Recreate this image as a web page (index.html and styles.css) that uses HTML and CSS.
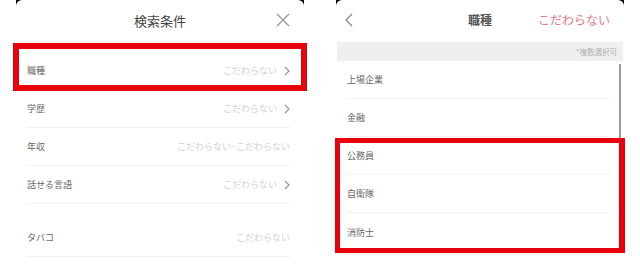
FILE: index.html
```html
<!DOCTYPE html>
<html lang="ja">
<head>
<meta charset="utf-8">
<link rel="stylesheet" href="styles.css">
</head>
<body>
<div class="panel">
  <div class="cap"></div>
  <div class="header">
    <span></span>
    <span class="title">検索条件</span>
    <svg class="close" width="14" height="14" viewBox="0 0 14 14"><path d="M1 1L13 13M13 1L1 13" stroke="#9a9a9a" stroke-width="1.4" fill="none"/></svg>
  </div>
  <div class="list left-list">
    <div class="row"><span class="label">職種</span><span class="value">こだわらない<svg class="chev" width="6" height="10" viewBox="0 0 6 10"><path d="M1 1L5 5L1 9" stroke="#999" stroke-width="1.3" fill="none"/></svg></span></div>
    <div class="row"><span class="label">学歴</span><span class="value">こだわらない<svg class="chev" width="6" height="10" viewBox="0 0 6 10"><path d="M1 1L5 5L1 9" stroke="#999" stroke-width="1.3" fill="none"/></svg></span></div>
    <div class="row"><span class="label">年収</span><span class="value">こだわらない~こだわらない</span></div>
    <div class="row"><span class="label">話せる言語</span><span class="value">こだわらない<svg class="chev" width="6" height="10" viewBox="0 0 6 10"><path d="M1 1L5 5L1 9" stroke="#999" stroke-width="1.3" fill="none"/></svg></span></div>
    <div class="row gap"><span class="label">タバコ</span><span class="value">こだわらない</span></div>
  </div>
  <div class="mark mark-left"></div>
</div>
<div class="panel">
  <div class="cap"></div>
  <div class="header header-right">
    <svg class="back" width="9" height="14" viewBox="0 0 9 14"><path d="M8 1L2 7L8 13" stroke="#8a8a8a" stroke-width="1.4" fill="none"/></svg>
    <span class="title title-bold">職種</span>
    <span class="reset">こだわらない</span>
  </div>
  <div class="note">*複数選択可</div>
  <div class="list right-list">
    <div class="row"><span class="label">上場企業</span></div>
    <div class="row"><span class="label">金融</span></div>
    <div class="row"><span class="label">公務員</span></div>
    <div class="row"><span class="label">自衛隊</span></div>
    <div class="row last"><span class="label">消防士</span></div>
  </div>
  <div class="scrollbar"></div>
  <div class="mark mark-right"></div>
</div>
</body>
</html>
```
FILE: styles.css
```css
* { box-sizing: border-box; }
html, body { margin: 0; padding: 0; }
body {
  width: 640px;
  height: 264px;
  overflow: hidden;
  background: #fff;
  display: flex;
  font-family: "Noto Sans CJK JP", "Noto Sans", sans-serif;
}
.panel {
  position: relative;
  width: 320px;
  height: 264px;
  display: flex;
  flex-direction: column;
}
.cap {
  height: 6px;
  margin: 0 16px;
  background: #000;
  position: relative;
}
.cap::after {
  content: "";
  position: absolute;
  inset: 0;
  background: #fff;
  border-radius: 7px 7px 0 0;
}
.header {
  height: 28px;
  display: grid;
  grid-template-columns: 1fr auto 1fr;
  align-items: center;
  padding: 0 30px;
}
.header-right { padding: 0 24px; }
.title {
  font-size: 13px;
  color: #444;
  line-height: 1;
}
.title-bold { font-size: 12px; font-weight: 700; color: #555; }
.close { justify-self: end; }
.back { justify-self: start; }
.reset {
  justify-self: end;
  margin-right: 6px;
  font-size: 12px;
  color: #e07a8b;
  line-height: 1;
}
.list { display: flex; flex-direction: column; }
.left-list { margin-top: 18px; padding: 0 30px 0 27px; }
.right-list { padding: 0 30px 0 27px; }
.row {
  height: 38px;
  display: flex;
  align-items: center;
  justify-content: space-between;
  border-bottom: 1px solid #f1f1f1;
}
.row.last { border-bottom: none; }
.row.gap { margin-top: 15px; }
.label {
  font-size: 9px;
  color: #666;
}
.value {
  display: flex;
  align-items: center;
  font-size: 9px;
  color: #d2d2d2;
}
.chev { margin-left: 7px; }
.note {
  margin: 8px 17px 0;
  height: 19px;
  background: #efefef;
  text-align: right;
  padding-right: 6px;
  font-size: 7.5px;
  line-height: 19px;
  color: #b0b0b0;
}
.scrollbar {
  position: absolute;
  left: 299px;
  top: 64px;
  width: 2px;
  height: 76px;
  background: #9a9a9a;
}
.mark {
  position: absolute;
  border-style: solid;
  border-color: #e8000c;
}
.mark-left {
  left: 13px;
  top: 43px;
  width: 294px;
  height: 48px;
  border-width: 6px;
}
.mark-right {
  left: 15px;
  top: 138px;
  width: 290px;
  height: 115px;
  border-width: 5px 6px 5px 5px;
}
```
